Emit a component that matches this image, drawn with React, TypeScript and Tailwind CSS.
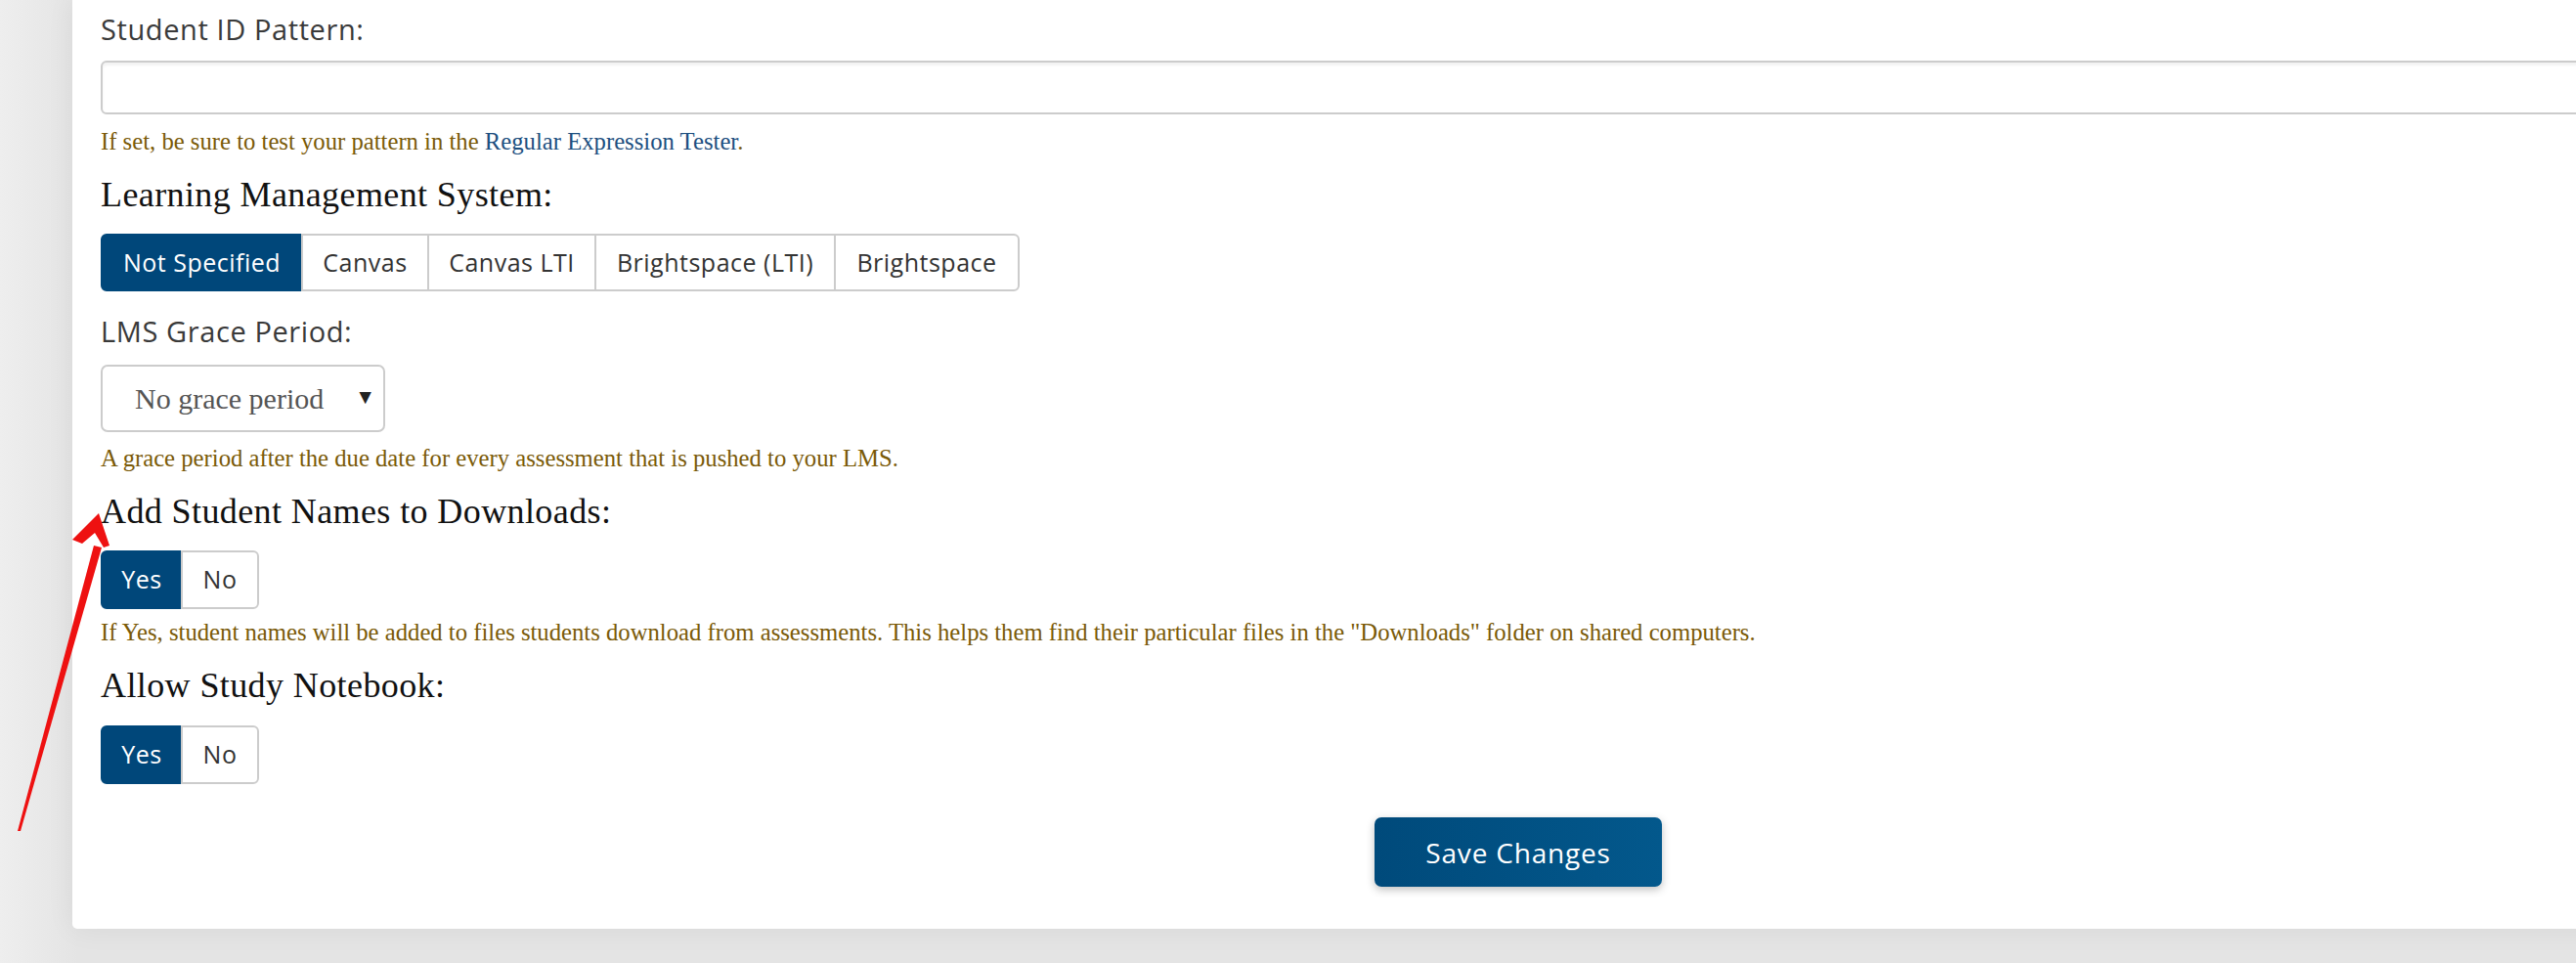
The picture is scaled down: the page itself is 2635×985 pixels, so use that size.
import { useState } from "react";

const sans = "font-['Open_Sans','Liberation_Sans',sans-serif]";
const serif = "font-['Liberation_Serif','Times_New_Roman',serif]";

const lmsOptions = ["Not Specified", "Canvas", "Canvas LTI", "Brightspace (LTI)", "Brightspace"];

function Segmented({
  options,
  value,
  onChange,
  widths,
}: {
  options: string[];
  value: string;
  onChange: (v: string) => void;
  widths: string[];
}) {
  return (
    <div className="flex h-full">
      {options.map((opt, i) => {
        const active = opt === value;
        const first = i === 0;
        const last = i === options.length - 1;
        return (
          <button
            key={opt}
            onClick={() => onChange(opt)}
            className={`${sans} ${widths[i]} h-full text-[25px] tracking-[0.5px] border-2 flex items-center justify-center ${
              active ? "bg-[#00477a] border-[#00477a] text-white" : "bg-white border-[#cccccc] text-[#333]"
            } ${first ? "rounded-l-[6px]" : "-ml-[2px]"} ${last ? "rounded-r-[6px]" : ""}`}
          >
            {opt}
          </button>
        );
      })}
    </div>
  );
}

function Heading({ children, className = "" }: { children: React.ReactNode; className?: string }) {
  return (
    <h3 className={`${serif} text-[36px] leading-[44px] tracking-[0.4px] text-[#111] ${className}`}>
      {children}
    </h3>
  );
}

function Help({ children, className = "" }: { children: React.ReactNode; className?: string }) {
  return <p className={`${serif} text-[24.7px] leading-[30px] text-[#7a5a08] ${className}`}>{children}</p>;
}

function Label({ children, className = "" }: { children: React.ReactNode; className?: string }) {
  return (
    <label className={`${sans} block text-[29px] leading-[34px] tracking-[0.6px] font-medium text-[#3a3a3a] ${className}`}>
      {children}
    </label>
  );
}

export default function App() {
  const [lms, setLms] = useState("Not Specified");
  const [names, setNames] = useState("Yes");
  const [notebook, setNotebook] = useState("Yes");

  return (
    <div className="relative w-[2635px] h-[985px] overflow-hidden bg-[#e4e4e4]">
      <div className="absolute inset-0 bg-gradient-to-r from-[#eeeeee] to-transparent w-[80px]" />
      <div className="relative ml-[74px] w-[2958px] bg-white rounded-b-[5px] shadow-[0_0_30px_rgba(0,0,0,0.06)] pl-[29px] pr-[29px] pt-[13px] pb-[43px]">
        <Label>Student ID Pattern:</Label>
        <input
          className="mt-[15px] block w-full h-[55px] border-2 border-[#cccccc] rounded-[6px] shadow-[inset_0_3px_3px_rgba(0,0,0,0.05)] outline-none"
          type="text"
        />
        <Help className="mt-[13px]">
          If set, be sure to test your pattern in the{" "}
          <a className="text-[#1d4f80]" href="#">
            Regular Expression Tester
          </a>
          .
        </Help>

        <Heading className="mt-[17px]">Learning Management System:</Heading>
        <div className="mt-[18px] h-[59px]">
          <Segmented
            options={lmsOptions}
            value={lms}
            onChange={setLms}
            widths={["w-[207px]", "w-[131px]", "w-[173px]", "w-[247px]", "w-[190px]"]}
          />
        </div>

        <Label className="mt-[24px]">LMS Grace Period:</Label>
        <div className="mt-[17px] w-[291px] h-[69px] border-2 border-[#cccccc] rounded-[7px] flex items-center pl-[33px] pr-[8px]">
          <span className={`${serif} text-[30px] text-[#555] flex-1`}>No grace period</span>
          <span className="text-[21px] text-[#222] leading-none mb-[4px]">▼</span>
        </div>
        <Help className="mt-[12px]">
          A grace period after the due date for every assessment that is pushed to your LMS.
        </Help>

        <Heading className="mt-[17px]">Add Student Names to Downloads:</Heading>
        <div className="mt-[18px] h-[60px]">
          <Segmented options={["Yes", "No"]} value={names} onChange={setNames} widths={["w-[84px]", "w-[80px]"]} />
        </div>
        <Help className="mt-[9px]">
          If Yes, student names will be added to files students download from assessments. This helps them find their
          particular files in the "Downloads" folder on shared computers.
        </Help>

        <Heading className="mt-[17px]">Allow Study Notebook:</Heading>
        <div className="mt-[19px] h-[60px]">
          <Segmented
            options={["Yes", "No"]}
            value={notebook}
            onChange={setNotebook}
            widths={["w-[84px]", "w-[80px]"]}
          />
        </div>

        <div className="mt-[34px] flex justify-center">
          <button
            className={`${sans} w-[294px] h-[71px] rounded-[7px] text-[28px] tracking-[0.8px] text-white bg-gradient-to-r from-[#004a7b] to-[#03588c] shadow-[0_3px_8px_rgba(0,0,0,0.25)]`}
          >
            Save Changes
          </button>
        </div>
      </div>

      <svg className="absolute left-0 top-0 pointer-events-none" width="140" height="900" viewBox="0 0 140 900">
        <polygon points="18,850 21,850 104,560 96,558" fill="#ee1111" />
        <polygon points="101,525 74,552 84,556 97,545 106,560 112,558" fill="#ee1111" />
      </svg>
    </div>
  );
}
